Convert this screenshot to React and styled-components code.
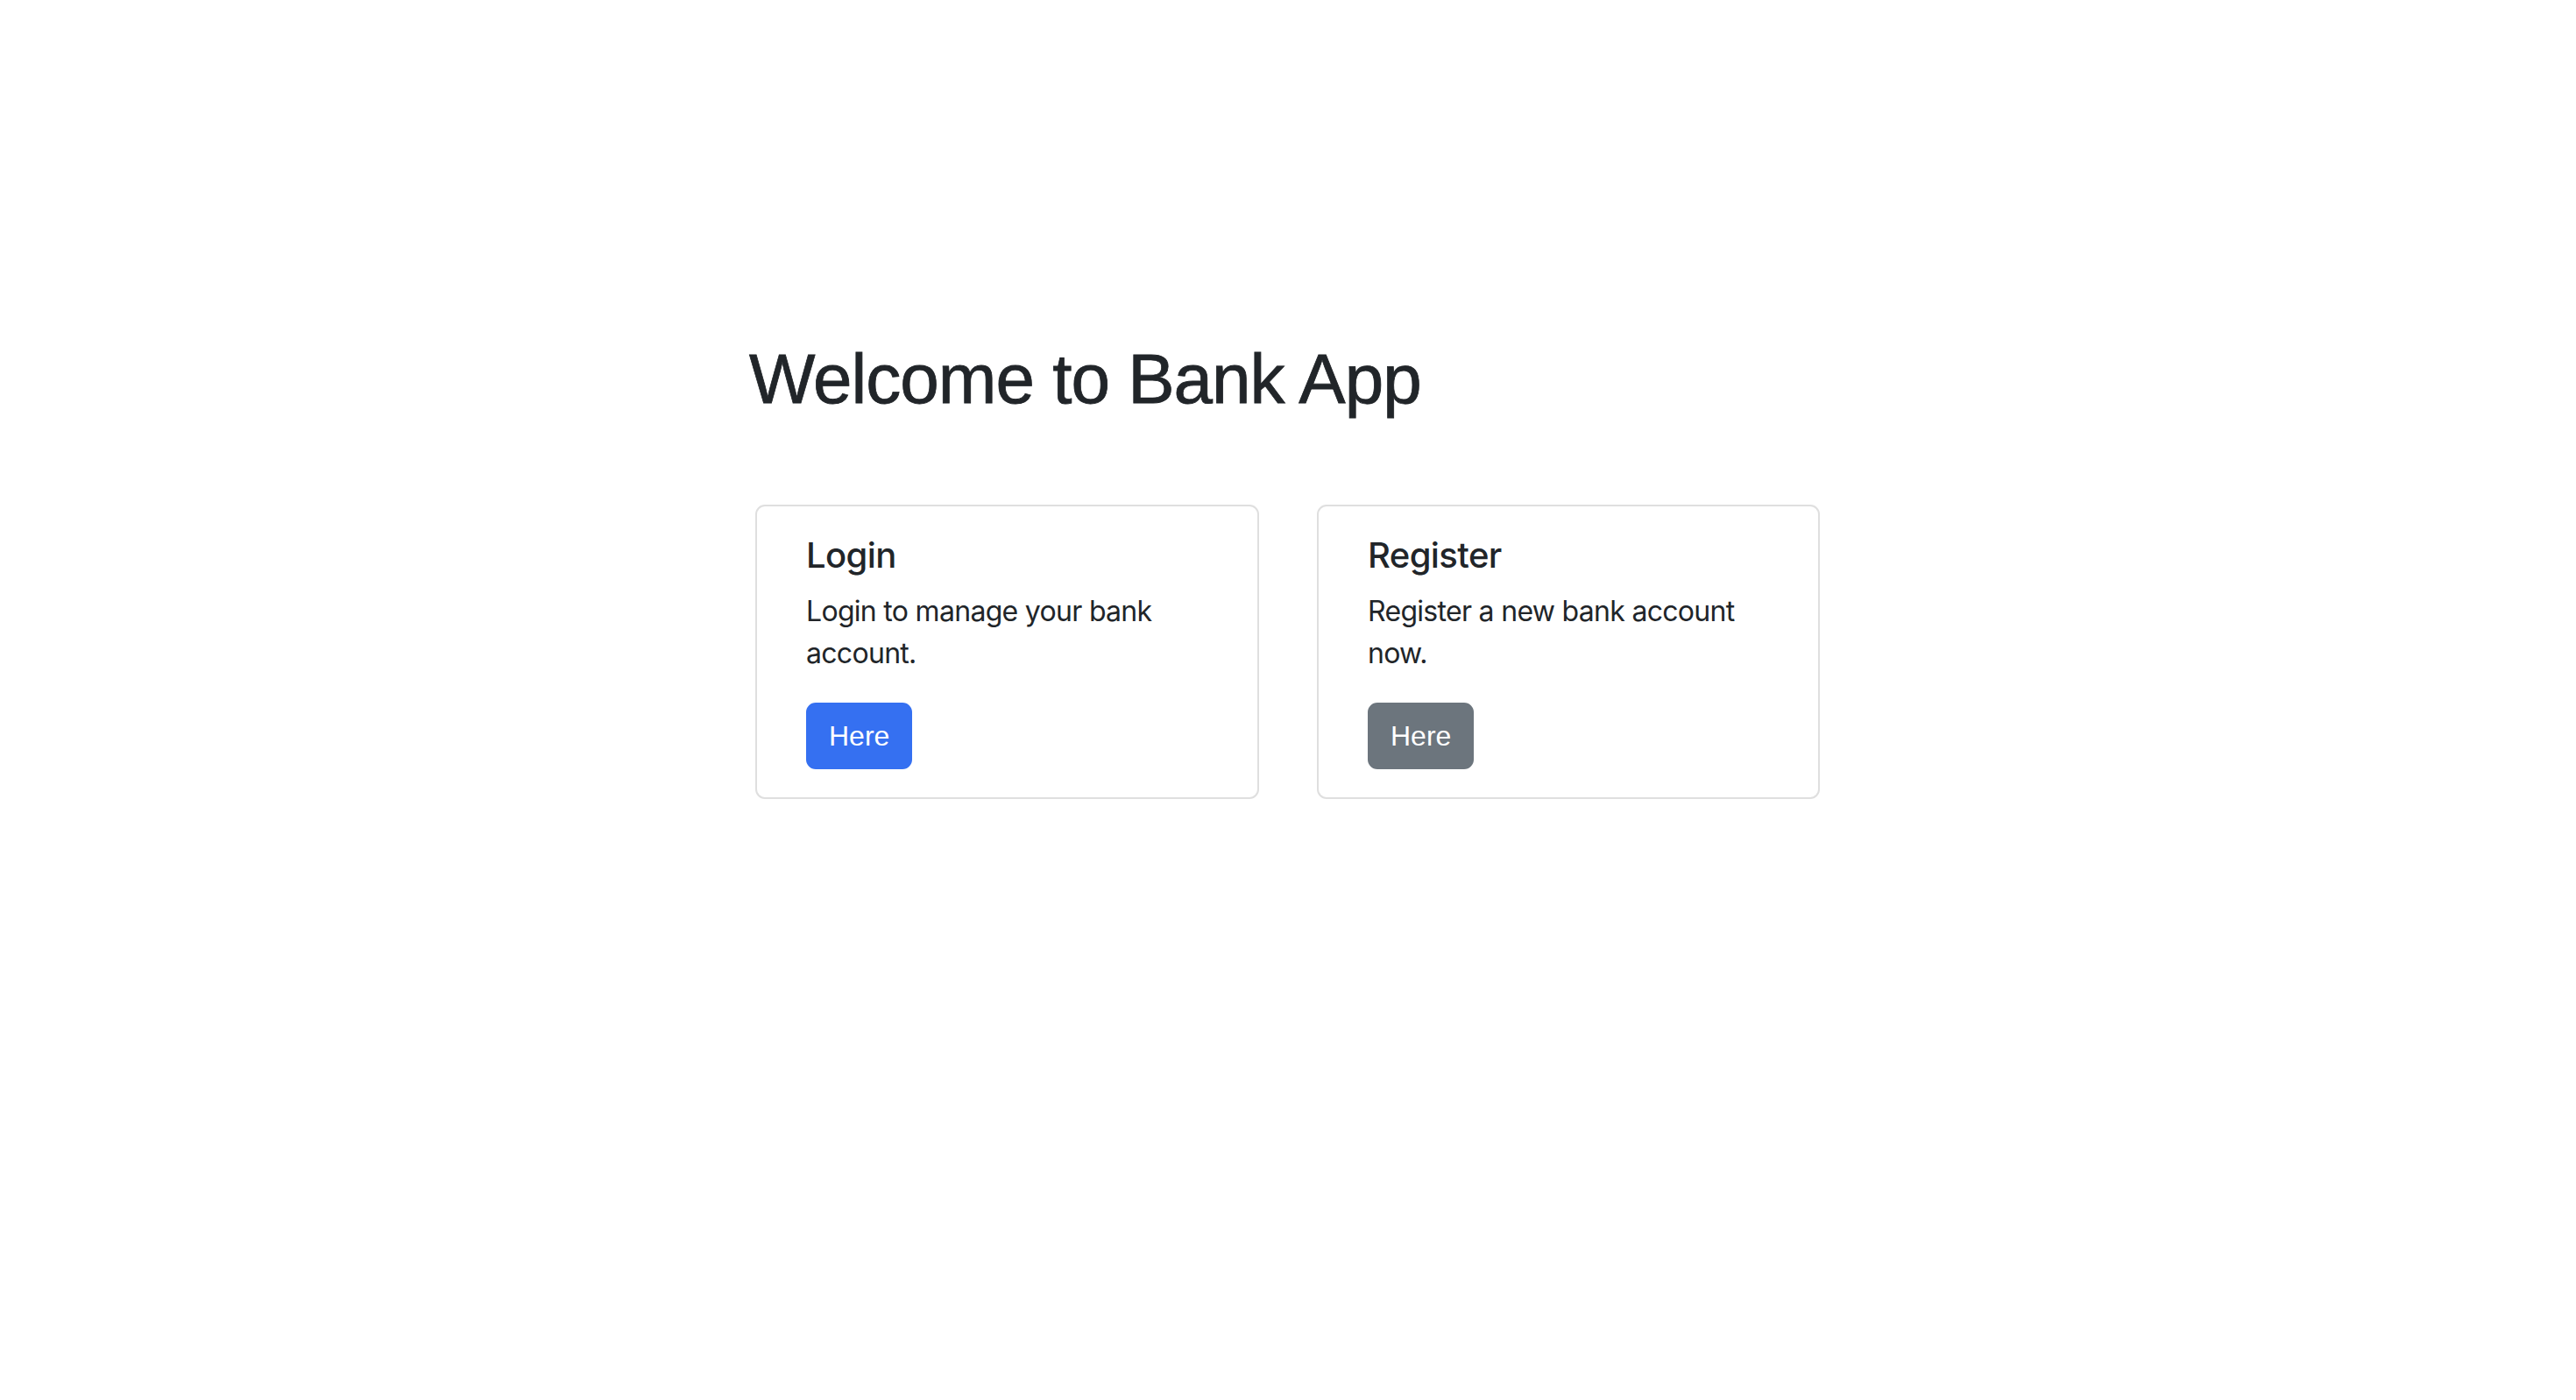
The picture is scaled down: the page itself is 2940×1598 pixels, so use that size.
import React from 'react';
import styled, { createGlobalStyle } from 'styled-components';

const GlobalStyle = createGlobalStyle`
  html,
  body {
    margin: 0;
    padding: 0;
    background: #fff;
    color: #212529;
    font-family: Inter, 'Noto Sans', sans-serif;
  }

  * {
    box-sizing: border-box;
  }
`;

const options = [
  {
    title: 'Login',
    text: 'Login to manage your bank account.',
    variant: 'primary',
  },
  {
    title: 'Register',
    text: 'Register a new bank account now.',
    variant: 'secondary',
  },
];

const colors = {
  primary: '#3570f1',
  secondary: '#6c757d',
};

const Main = styled.main`
  width: 1230px;
  margin: 0 auto;
  padding-top: 385px;
`;

const Heading = styled.h1`
  margin: 0 0 95px;
  font-family: 'Liberation Sans', Arial, sans-serif;
  font-size: 80px;
  font-weight: 400;
  line-height: 1.2;
  letter-spacing: -1px;
  color: #212529;
  -webkit-text-stroke: 0.8px #212529;
`;

const CardRow = styled.div`
  display: grid;
  grid-template-columns: 575px 574px;
  gap: 66px;
  margin-left: 7px;
`;

const Card = styled.section`
  border: 2px solid #dfdfdf;
  border-radius: 11px;
  padding: 32px 56px;
  background: #fff;
`;

const CardTitle = styled.h5`
  margin: 0 0 16px;
  font-size: 40px;
  font-weight: 500;
  line-height: 1.2;
  letter-spacing: -0.6px;
`;

const CardText = styled.p`
  margin: 0 0 32px;
  font-size: 32px;
  line-height: 1.5;
  letter-spacing: -0.7px;
`;

const Button = styled.button`
  display: inline-block;
  height: 76px;
  padding: 0 24px;
  border: 2px solid ${({ $variant }) => colors[$variant]};
  border-radius: 11px;
  background: ${({ $variant }) => colors[$variant]};
  color: #fff;
  font-family: 'Liberation Sans', Arial, sans-serif;
  font-size: 32px;
  line-height: 1;
  cursor: pointer;
`;

const App = () => (
  <>
    <GlobalStyle />
    <Main>
      <Heading>Welcome to Bank App</Heading>

      <CardRow>
        {options.map(option => (
          <Card key={option.title}>
            <CardTitle>{option.title}</CardTitle>
            <CardText>{option.text}</CardText>
            <Button $variant={option.variant}>Here</Button>
          </Card>
        ))}
      </CardRow>
    </Main>
  </>
);

export default App;
